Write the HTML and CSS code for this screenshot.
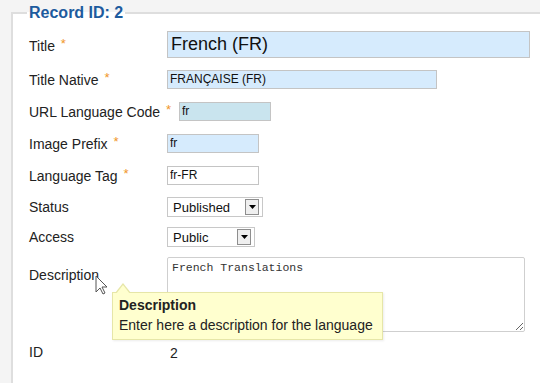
FILE: index.html
```html
<!DOCTYPE html>
<html lang="en">
<head>
    <meta charset="UTF-8">
    <meta name="viewport" content="width=device-width, initial-scale=1.0">
    <title>Edit Language</title>
    <link rel="stylesheet" href="styles.css">
</head>
<body>
    <div class="page">
        <fieldset class="record">
            <legend>Record ID: 2</legend>

            <div class="row row-title">
                <label class="label">Title <span class="star">*</span></label>
                <input type="text" class="field field-title req" value="French (FR)">
            </div>
            <div class="row">
                <label class="label">Title Native <span class="star">*</span></label>
                <input type="text" class="field field-native req" value="FRANÇAISE (FR)">
            </div>
            <div class="row">
                <label class="label">URL Language Code <span class="star">*</span></label>
                <input type="text" class="field field-short req hover" value="fr">
            </div>
            <div class="row">
                <label class="label">Image Prefix <span class="star">*</span></label>
                <input type="text" class="field field-short req" value="fr">
            </div>
            <div class="row">
                <label class="label">Language Tag <span class="star">*</span></label>
                <input type="text" class="field field-short" value="fr-FR">
            </div>
            <div class="row row-select">
                <label class="label">Status</label>
                <div class="select select-status">
                    <span class="select-text">Published</span>
                    <span class="select-btn">
                        <svg width="7" height="4" viewBox="0 0 7 4"><path d="M0 0h7L3.5 4z" fill="#000"/></svg>
                    </span>
                </div>
            </div>
            <div class="row row-select">
                <label class="label">Access</label>
                <div class="select select-access">
                    <span class="select-text">Public</span>
                    <span class="select-btn">
                        <svg width="7" height="4" viewBox="0 0 7 4"><path d="M0 0h7L3.5 4z" fill="#000"/></svg>
                    </span>
                </div>
            </div>
            <div class="row row-desc">
                <label class="label">Description</label>
                <textarea class="desc">French Translations</textarea>
            </div>
            <div class="row row-id">
                <span class="label">ID</span>
                <span class="value">2</span>
            </div>
        </fieldset>

        <!-- hover tooltip for the description label -->
        <div class="tooltip">
            <div class="tooltip-title">Description</div>
            <div class="tooltip-text">Enter here a description for the language</div>
        </div>

        <svg class="cursor" width="13" height="20" viewBox="0 0 13 20">
            <path d="M1 1v16l4-4 3 6 2-1-3-6h5z" fill="#fff" stroke="#555" stroke-width="1" stroke-linejoin="round"/>
        </svg>
    </div>
</body>
</html>
```

FILE: styles.css
```css
body {
    margin: 0;
    background-color: #f4f4f4;
    font-family: Arial, "Liberation Sans", sans-serif;
    color: #222;
    overflow: hidden;
}

.page {
    position: relative;
    height: 383px;
    padding-left: 11px;
    box-sizing: border-box;
}

/* the form box runs on past the right and bottom edges */
.record {
    width: 529px;
    height: 379px;
    margin: 4px 0 0 0;
    padding: 9px 0 0 16px;
    background-color: #ffffff;
    border: 2px solid #dedede;
    border-right: 0;
    border-bottom: 0;
    box-sizing: border-box;
}

.record legend {
    margin-left: -2px;
    padding: 0 2px;
    font-size: 16px;
    font-weight: bold;
    line-height: 18px;
    color: #1d5b9e;
}

.row {
    display: flex;
    align-items: center;
    margin-bottom: 12px;
}

.row-title {
    margin-bottom: 11px;
}

.row-select {
    margin-bottom: 10px;
}

.label {
    flex: 0 0 auto;
    min-width: 138px;
    padding-right: 8px;
    box-sizing: border-box;
    font-size: 14px;
    line-height: 17px;
    color: #222;
}

.star {
    margin-left: 2px;
    font-size: 13px;
    color: #f0962a;
    vertical-align: 3px;
}

.field {
    height: 19px;
    padding: 0 2px;
    border: 1px solid #c4c4c4;
    box-sizing: border-box;
    font-family: Arial, "Liberation Sans", sans-serif;
    font-size: 12px;
    color: #111;
    background-color: #ffffff;
    outline: none;
}

.field.req {
    background-color: #d6ebfd;
}

.field.hover {
    background-color: #c9e4ee;
}

.field-title {
    width: 363px;
    height: 27px;
    font-size: 18px;
    padding-left: 3px;
}

.field-native {
    width: 270px;
}

.field-short {
    width: 92px;
}

.select {
    display: flex;
    align-items: center;
    height: 20px;
    border: 1px solid #c8c8c8;
    box-sizing: border-box;
    background-color: #ffffff;
}

.select-status {
    width: 96px;
}

.select-access {
    width: 88px;
}

.select-text {
    flex: 1;
    padding-left: 5px;
    font-size: 13px;
    color: #111;
}

.select-btn {
    display: flex;
    align-items: center;
    justify-content: center;
    width: 12px;
    height: 14px;
    margin-right: 3px;
    border: 1px solid #8e8e8e;
    background-color: #efefef;
}

.row-desc {
    align-items: flex-start;
    margin-bottom: 12px;
}

.row-desc .label {
    padding-top: 10px;
}

.desc {
    width: 358px;
    height: 75px;
    margin: 0;
    padding: 3px 4px;
    border: 1px solid #cfcfcf;
    border-radius: 2px;
    box-sizing: border-box;
    font-family: "Liberation Mono", "Courier New", monospace;
    font-size: 11.5px;
    color: #333;
    resize: both;
}

.value {
    padding-left: 3px;
    font-size: 14px;
}

.tooltip {
    position: absolute;
    left: 112px;
    top: 288px;
    width: 271px;
    height: 48px;
    padding: 3px 6px 0 6px;
    box-sizing: border-box;
    background-color: #ffffcf;
    border: 1px solid #e6e6a8;
    box-shadow: 1px 1px 2px rgba(0, 0, 0, 0.08);
}

.tooltip::before,
.tooltip::after {
    content: "";
    position: absolute;
    left: 2px;
    border-style: solid;
    border-color: transparent;
}

.tooltip::before {
    top: -10px;
    border-width: 0 8px 10px 8px;
    border-bottom-color: #e6e6a8;
}

.tooltip::after {
    top: -8px;
    left: 3px;
    border-width: 0 7px 9px 7px;
    border-bottom-color: #ffffcf;
}

.tooltip-title {
    font-size: 14px;
    font-weight: bold;
    line-height: 19px;
    color: #222;
}

.tooltip-text {
    font-size: 14px;
    line-height: 20px;
    color: #222;
}

.cursor {
    position: absolute;
    left: 95px;
    top: 271px;
}
```
